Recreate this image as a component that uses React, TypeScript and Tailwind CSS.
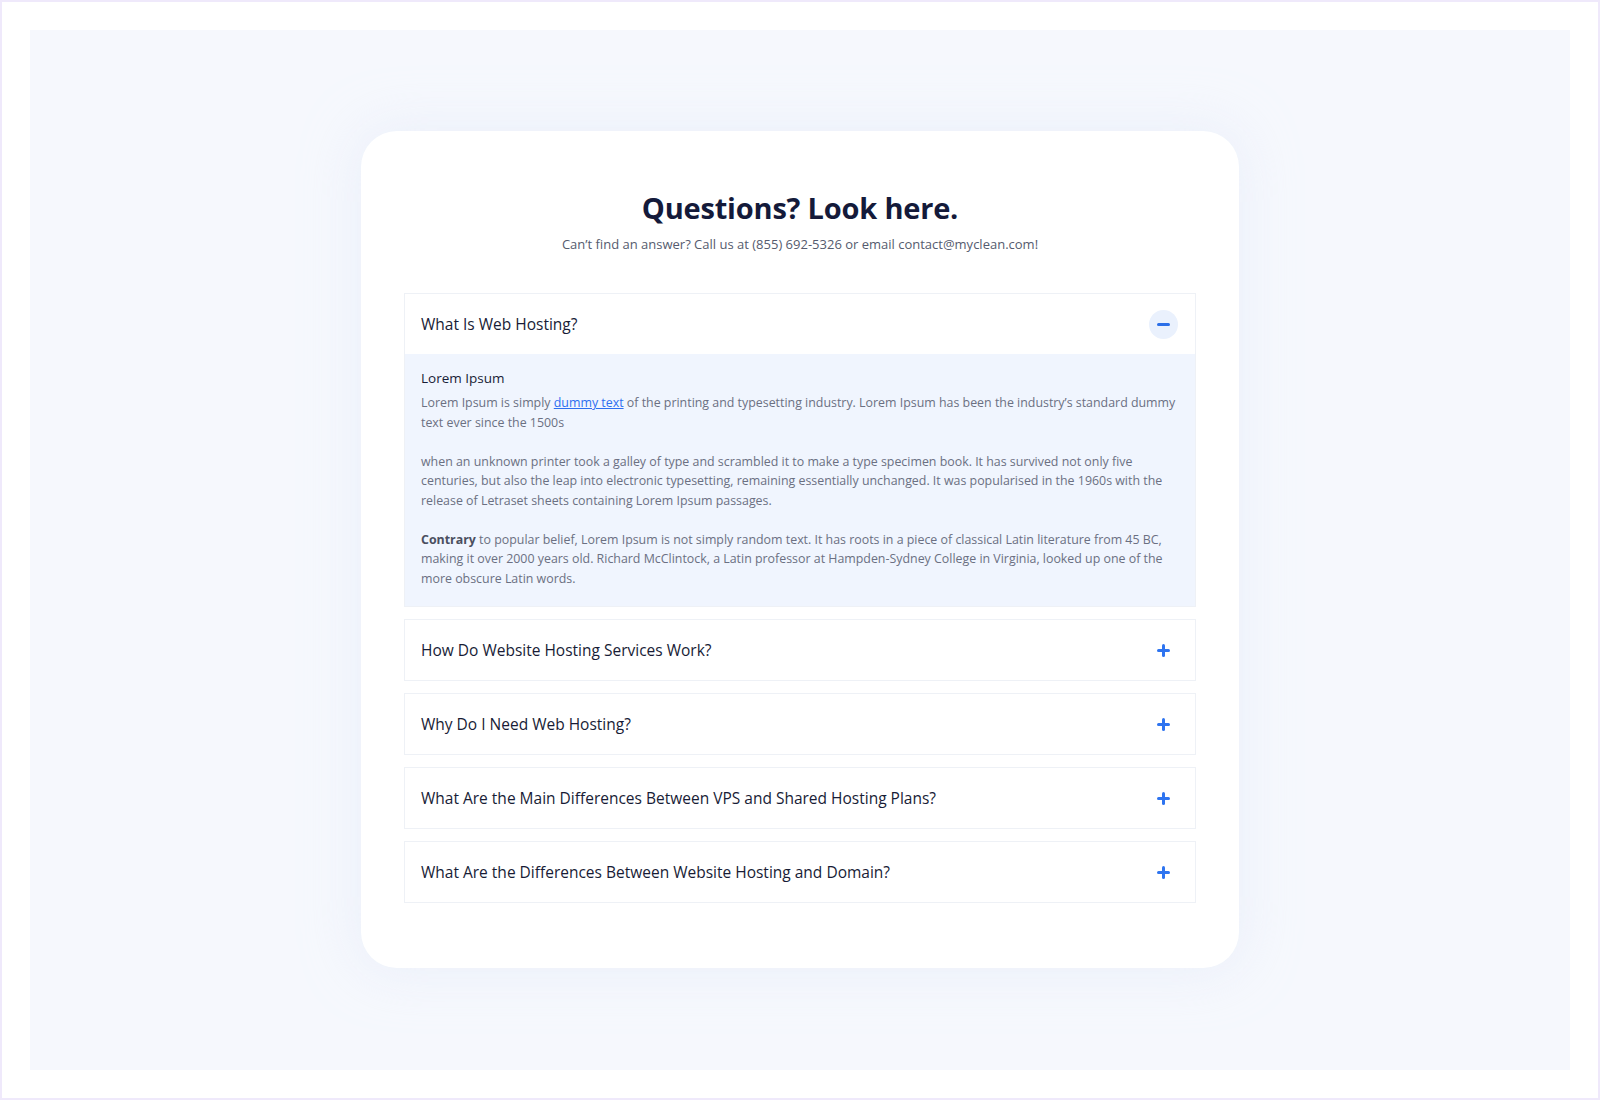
import { useState } from 'react'

const faqs = [
  'What Is Web Hosting?',
  'How Do Website Hosting Services Work?',
  'Why Do I Need Web Hosting?',
  'What Are the Main Differences Between VPS and Shared Hosting Plans?',
  'What Are the Differences Between Website Hosting and Domain?',
]

function ToggleIcon({ open }: { open: boolean }) {
  if (open) {
    return (
      <span className="flex h-[29px] w-[29px] items-center justify-center rounded-full bg-[#eaf1fd]">
        <span className="block h-[3px] w-[13px] rounded-full bg-[#2b6fe8]" />
      </span>
    )
  }
  return (
    <span className="relative flex h-[29px] w-[29px] items-center justify-center">
      <span className="absolute h-[3px] w-[13px] rounded-full bg-[#2e74f0]" />
      <span className="absolute h-[13px] w-[3px] rounded-full bg-[#2e74f0]" />
    </span>
  )
}

export default function App() {
  const [open, setOpen] = useState(0)

  return (
    <div
      className="h-[1100px] w-full border-2 border-[#efe9fb] bg-white p-[28px]"
      style={{ fontFamily: '"Open Sans", "Noto Sans", sans-serif' }}
    >
      <div className="flex h-full justify-center bg-[#f6f8fd] pt-[101px]">
        <div className="h-[837px] w-[878px] rounded-[36px] bg-white px-[43px] pt-[58px] shadow-[0_0_50px_6px_rgba(228,234,250,0.55)]">
          <h1 className="text-center text-[29px] font-bold leading-[38px] tracking-[-0.2px] text-[#141a3a]">
            Questions? Look here.
          </h1>
          <p className="mt-[7px] text-center text-[13px] leading-[20px] text-[#555b6e]">
            Can’t find an answer? Call us at (855) 692-5326 or email contact@myclean.com!
          </p>

          <div className="mt-[39px] flex flex-col gap-[12px]">
            {faqs.map((q, i) => (
              <div key={q} className="border border-[#eef1f6] bg-white">
                <button
                  onClick={() => setOpen(open === i ? -1 : i)}
                  className="flex h-[60px] w-full items-center justify-between pl-[16px] pr-[17px] text-left"
                >
                  <span className="pt-[2px] text-[15.5px] font-medium text-[#181c36]">{q}</span>
                  <ToggleIcon open={open === i} />
                </button>
                {open === i && (
                  <div className="bg-[#f0f5fe] px-[16px] pb-[18px] pt-[14px] text-[12.4px] leading-[19.5px] text-[#6b7082]">
                    <h3 className="mb-[5px] text-[13.5px] font-medium leading-[20px] text-[#181c36]">
                      Lorem Ipsum
                    </h3>
                    <p>
                      Lorem Ipsum is simply{' '}
                      <a href="#" className="text-[#2e6ff0] underline">
                        dummy text
                      </a>{' '}
                      of the printing and typesetting industry. Lorem Ipsum has been the industry’s
                      standard dummy text ever since the 1500s
                    </p>
                    <p className="mt-[19.5px]">
                      when an unknown printer took a galley of type and scrambled it to make a type
                      specimen book. It has survived not only five centuries, but also the leap into
                      electronic typesetting, remaining essentially unchanged. It was popularised in
                      the 1960s with the release of Letraset sheets containing Lorem Ipsum passages.
                    </p>
                    <p className="mt-[19.5px]">
                      <strong className="font-bold text-[#4a4f60]">Contrary</strong> to popular
                      belief, Lorem Ipsum is not simply random text. It has roots in a piece of
                      classical Latin literature from 45 BC, making it over 2000 years old. Richard
                      McClintock, a Latin professor at Hampden-Sydney College in Virginia, looked up
                      one of the more obscure Latin words.
                    </p>
                  </div>
                )}
              </div>
            ))}
          </div>
        </div>
      </div>
    </div>
  )
}
